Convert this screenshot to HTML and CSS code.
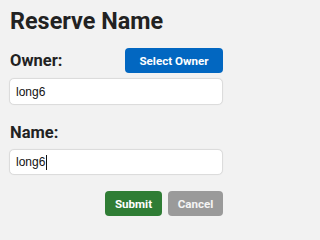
FILE: index.html
```html
<!DOCTYPE html>
<html>
<head>
<meta charset="utf-8">
<link rel="stylesheet" href="styles.css">
</head>
<body>
<div class="dialog">
  <h1 class="title">Reserve Name</h1>
  <div class="owner-row">
    <label class="label">Owner:</label>
    <button class="btn btn-blue">Select Owner</button>
  </div>
  <input class="field" type="text" value="long6">
  <label class="label name-label">Name:</label>
  <div class="field field-active"><span>long6</span><span class="caret"></span></div>
  <div class="actions">
    <button class="btn btn-green">Submit</button>
    <button class="btn btn-gray">Cancel</button>
  </div>
</div>
</body>
</html>
```
FILE: styles.css
```css
html, body {
  margin: 0;
  padding: 0;
  background: #f2f2f2;
}
body {
  font-family: Roboto, "Liberation Sans", Arial, sans-serif;
  color: #222;
}
.dialog {
  width: 214px;
  padding: 7px 0 0 9px;
  display: flex;
  flex-direction: column;
}
.title {
  margin: 0 0 0 1px;
  font-size: 23.4px;
  line-height: 28px;
  font-weight: bold;
  color: #222;
}
.owner-row {
  margin-top: 13px;
  display: flex;
  justify-content: space-between;
  align-items: center;
}
.label {
  display: block;
  font-size: 16.5px;
  line-height: 20px;
  font-weight: bold;
  margin-left: 1px;
  color: #222;
}
.btn {
  border: none;
  border-radius: 4px;
  color: #fff;
  font-family: Roboto, "Liberation Sans", Arial, sans-serif;
  font-weight: bold;
  font-size: 11.6px;
  height: 25px;
  padding: 0;
  cursor: pointer;
}
.btn-blue {
  background: #0267c1;
  width: 98px;
}
.btn-green {
  background: #2f7d35;
  width: 57px;
}
.btn-gray {
  background: #9a9a9a;
  width: 55px;
  color: #f4f4f4;
}
.field {
  box-sizing: border-box;
  width: 214px;
  height: 27px;
  margin: 5px 0 0 0;
  border: 1px solid #dcdcdc;
  border-radius: 5px;
  background: #fff;
  box-shadow: 0 0 1px rgba(0,0,0,0.08);
  padding: 0 6px;
  font-family: "Liberation Sans", Arial, sans-serif;
  font-size: 12px;
  color: #111;
  outline: none;
}
.field-active {
  margin-top: 6px;
  height: 26px;
  display: flex;
  align-items: center;
}
.caret {
  display: inline-block;
  width: 1px;
  height: 15px;
  background: #111;
  margin-left: 1px;
}
.name-label {
  margin-top: 18px;
}
.actions {
  margin-top: 16px;
  display: flex;
  justify-content: flex-end;
  gap: 6px;
}
```
